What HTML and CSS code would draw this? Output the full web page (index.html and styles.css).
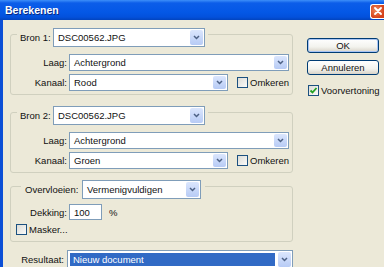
FILE: index.html
```html
<!DOCTYPE html>
<html lang="nl">
<head>
    <meta charset="UTF-8">
    <meta name="viewport" content="width=device-width, initial-scale=1.0">
    <title>Berekenen</title>
    <link rel="stylesheet" href="styles.css">
</head>
<body>
    <div class="window">
        <div class="titlebar">
            <span class="title">Berekenen</span>
            <span class="close">
                <svg width="8" height="8" viewBox="0 0 8 8"><path d="M1 1 L7 7 M7 1 L1 7" stroke="#fff" stroke-width="1.8" stroke-linecap="round"/></svg>
            </span>
        </div>

        <div class="dialog">
            <div class="main">
                <!-- Bron 1 -->
                <div class="group">
                    <div class="group-head">
                        <span class="head-label">Bron 1:</span>
                        <div class="select select-file">
                            <span class="value">DSC00562.JPG</span>
                            <span class="arrow"><svg width="7" height="5" viewBox="0 0 7 5"><path d="M1 1 L3.5 3.5 L6 1" fill="none" stroke="#4d6185" stroke-width="1.5"/></svg></span>
                        </div>
                    </div>
                    <div class="rows">
                        <div class="row">
                            <span class="label">Laag:</span>
                            <div class="select select-wide">
                                <span class="value">Achtergrond</span>
                                <span class="arrow"><svg width="7" height="5" viewBox="0 0 7 5"><path d="M1 1 L3.5 3.5 L6 1" fill="none" stroke="#4d6185" stroke-width="1.5"/></svg></span>
                            </div>
                        </div>
                        <div class="row">
                            <span class="label">Kanaal:</span>
                            <div class="select select-short">
                                <span class="value">Rood</span>
                                <span class="arrow"><svg width="7" height="5" viewBox="0 0 7 5"><path d="M1 1 L3.5 3.5 L6 1" fill="none" stroke="#4d6185" stroke-width="1.5"/></svg></span>
                            </div>
                            <label class="check check-invert"><span class="box"></span>Omkeren</label>
                        </div>
                    </div>
                </div>

                <!-- Bron 2 -->
                <div class="group group-second">
                    <div class="group-head">
                        <span class="head-label">Bron 2:</span>
                        <div class="select select-file">
                            <span class="value">DSC00562.JPG</span>
                            <span class="arrow"><svg width="7" height="5" viewBox="0 0 7 5"><path d="M1 1 L3.5 3.5 L6 1" fill="none" stroke="#4d6185" stroke-width="1.5"/></svg></span>
                        </div>
                    </div>
                    <div class="rows">
                        <div class="row">
                            <span class="label">Laag:</span>
                            <div class="select select-wide">
                                <span class="value">Achtergrond</span>
                                <span class="arrow"><svg width="7" height="5" viewBox="0 0 7 5"><path d="M1 1 L3.5 3.5 L6 1" fill="none" stroke="#4d6185" stroke-width="1.5"/></svg></span>
                            </div>
                        </div>
                        <div class="row">
                            <span class="label">Kanaal:</span>
                            <div class="select select-short">
                                <span class="value">Groen</span>
                                <span class="arrow"><svg width="7" height="5" viewBox="0 0 7 5"><path d="M1 1 L3.5 3.5 L6 1" fill="none" stroke="#4d6185" stroke-width="1.5"/></svg></span>
                            </div>
                            <label class="check check-invert"><span class="box"></span>Omkeren</label>
                        </div>
                    </div>
                </div>

                <!-- Overvloeien -->
                <div class="group group-blend">
                    <div class="group-head">
                        <span class="head-label">Overvloeien:</span>
                        <div class="select select-blend">
                            <span class="value">Vermenigvuldigen</span>
                            <span class="arrow"><svg width="7" height="5" viewBox="0 0 7 5"><path d="M1 1 L3.5 3.5 L6 1" fill="none" stroke="#4d6185" stroke-width="1.5"/></svg></span>
                        </div>
                    </div>
                    <div class="blend-body">
                        <div class="row row-opacity">
                            <span class="label">Dekking:</span>
                            <span class="input">100</span>
                            <span class="unit">%</span>
                        </div>
                        <label class="check check-mask"><span class="box"></span>Masker...</label>
                    </div>
                </div>

                <div class="row row-result">
                    <span class="label">Resultaat:</span>
                    <div class="select select-result">
                        <span class="value"><span class="selected">Nieuw document</span></span>
                        <span class="arrow"><svg width="7" height="5" viewBox="0 0 7 5"><path d="M1 1 L3.5 3.5 L6 1" fill="none" stroke="#4d6185" stroke-width="1.5"/></svg></span>
                    </div>
                </div>
            </div>

            <div class="side">
                <button class="btn btn-default">OK</button>
                <button class="btn">Annuleren</button>
                <label class="check check-preview">
                    <span class="box box-checked"><svg width="9" height="9" viewBox="0 0 9 9"><path d="M1.5 4.5 L3.5 6.5 L7.5 2" fill="none" stroke="#21a121" stroke-width="1.8"/></svg></span>
                    Voorvertoning
                </label>
            </div>
        </div>
    </div>
</body>
</html>
```

FILE: styles.css
```css
* {
    margin: 0;
    padding: 0;
    box-sizing: border-box;
}

body {
    background: #ece9d8;
    font-family: "Liberation Sans", Arial, sans-serif;
    font-size: 9.5px;
    color: #111;
}

.window {
    width: 384px;
    height: 267px;
    overflow: hidden;
}

.titlebar {
    height: 20px;
    display: flex;
    align-items: center;
    justify-content: space-between;
    padding-left: 5px;
    background: linear-gradient(#3d8ff9 0, #0c5de9 3px, #0458e6 12px, #0351dc 17px, #0244be 20px);
}

.title {
    color: #fff;
    font-weight: bold;
    font-size: 10.5px;
    text-shadow: 1px 1px #0a2a80;
}

.close {
    width: 14px;
    height: 15px;
    margin-top: 2px;
    border: 1px solid #fff;
    border-right: none;
    border-radius: 3px 0 0 3px;
    background: radial-gradient(circle at 40% 40%, #f08a5d, #d5421b 70%);
    display: flex;
    align-items: center;
    justify-content: center;
}

.dialog {
    display: flex;
    height: 247px;
    border-left: 3px solid #0b4fd6;
    padding-left: 7px;
}

.main {
    width: 283px;
    padding-top: 14px;
}

.group {
    border: 1px solid #d0d0bf;
    border-radius: 3px;
}

.group-second {
    margin-top: 17px;
}

.group-blend {
    margin-top: 13px;
}

.group-head {
    display: flex;
    align-items: center;
    gap: 3px;
    width: fit-content;
    height: 19px;
    margin: -7px 0 0 6px;
    padding: 0 3px;
    background: #ece9d8;
}

.head-label {
    width: 30px;
    text-align: right;
    white-space: nowrap;
}

.rows {
    display: flex;
    flex-direction: column;
    gap: 3px;
    margin-top: 7px;
    padding-bottom: 3px;
}

.row {
    display: flex;
    align-items: center;
    height: 17px;
}

.label {
    width: 56px;
    margin-right: 2px;
    text-align: right;
    white-space: nowrap;
}

.select {
    display: flex;
    height: 100%;
    border: 1px solid #7f9db9;
    background: #fff;
}

.select .value {
    flex: 1;
    display: flex;
    align-items: center;
    padding-left: 4px;
    white-space: nowrap;
    overflow: hidden;
}

.select .arrow {
    width: 13px;
    margin: 1px;
    border-radius: 2px;
    background: linear-gradient(#dbe6fd, #b7cbf5);
    display: flex;
    align-items: center;
    justify-content: center;
}

.select-file {
    width: 152px;
}

.select-wide {
    width: 220px;
}

.select-short {
    width: 159px;
}

.check {
    display: flex;
    align-items: center;
    gap: 2px;
    white-space: nowrap;
}

.box {
    width: 11px;
    height: 11px;
    border: 1px solid #1c5180;
    background: linear-gradient(135deg, #dcdcd7, #fafaf8);
    display: flex;
    align-items: center;
    justify-content: center;
}

.check-invert {
    margin-left: 9px;
}

/* Overvloeien group */
.group-blend .group-head {
    margin-left: 10px;
    padding: 0 4px;
    gap: 4px;
}

.group-blend .head-label {
    width: 53px;
}

.select-blend {
    width: 119px;
}

.blend-body {
    padding-bottom: 6px;
}

.row-opacity {
    height: 16px;
    margin-top: 5px;
}

.input {
    width: 33px;
    height: 100%;
    border: 1px solid #7f9db9;
    background: #fff;
    padding-left: 4px;
    display: flex;
    align-items: center;
}

.unit {
    margin-left: 7px;
}

.check-mask {
    height: 12px;
    margin-top: 3px;
    padding-left: 5px;
}

.row-result {
    height: 19px;
    margin-top: 8px;
}

.row-result .label {
    width: 57px;
    margin-right: 3px;
}

.select-result {
    width: 226px;
    flex-shrink: 0;
}

.select-result .value {
    padding: 2px;
}

.selected {
    flex: 1;
    height: 100%;
    background: #316ac5;
    color: #fff;
    padding-left: 3px;
    display: flex;
    align-items: center;
}

/* buttons column */
.side {
    display: flex;
    flex-direction: column;
    width: 72px;
    margin-left: 14px;
    padding-top: 18px;
}

.btn {
    height: 15px;
    border: 1px solid #003c74;
    border-radius: 3px;
    background: linear-gradient(#fff, #f3f3ee 60%, #d8d3c8);
    font-family: "Liberation Sans", Arial, sans-serif;
    font-size: 9.5px;
    color: #111;
}

.btn-default {
    box-shadow: inset 0 0 0 1px #a8c4f4;
}

.btn + .btn {
    margin-top: 7px;
}

.check-preview {
    margin-top: 10px;
    padding-left: 1px;
}
```
